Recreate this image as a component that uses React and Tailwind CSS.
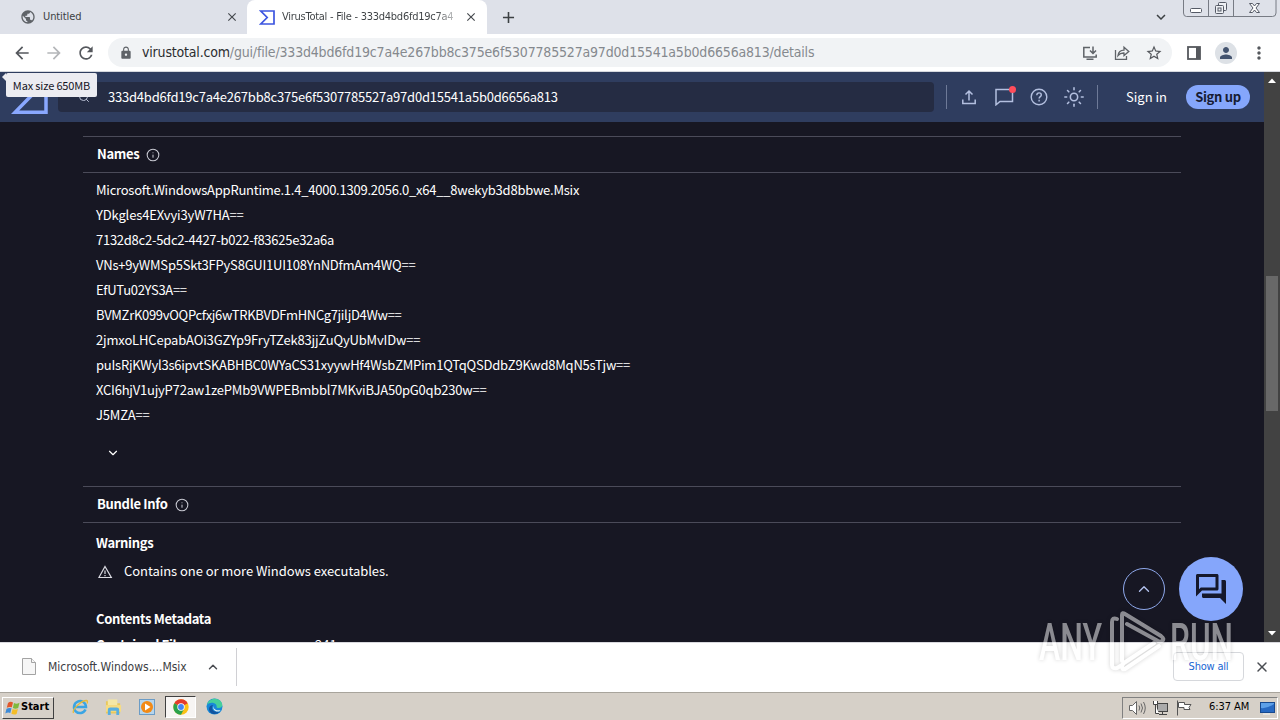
import { ChevronDown, ChevronUp, Info, Search, Sun, X } from 'lucide-react';
import {
  MdAdd, MdArrowBack, MdArrowForward, MdClose, MdExpandMore, MdLock, MdMoreVert, MdOutlineForum,
  MdPerson, MdPublic, MdRefresh, MdStarBorder,
} from 'react-icons/md';

const HASH = '333d4bd6fd19c7a4e267bb8c375e6f5307785527a97d0d15541a5b0d6656a813';

const names = [
  { text: 'Microsoft.WindowsAppRuntime.1.4_4000.1309.2056.0_x64__8wekyb3d8bbwe.Msix', cls: 'tracking-[-0.24px]' },
  { text: 'YDkgles4EXvyi3yW7HA==', cls: 'tracking-[-0.15px]' },
  { text: '7132d8c2-5dc2-4427-b022-f83625e32a6a', cls: 'tracking-[-0.26px]' },
  { text: 'VNs+9yWMSp5Skt3FPyS8GUI1UI108YnNDfmAm4WQ==', cls: 'tracking-[-0.22px]' },
  { text: 'EfUTu02YS3A==', cls: 'tracking-[-0.3px]' },
  { text: 'BVMZrK099vOQPcfxj6wTRKBVDFmHNCg7jiljD4Ww==', cls: 'tracking-[-0.3px]' },
  { text: '2jmxoLHCepabAOi3GZYp9FryTZek83jjZuQyUbMvIDw==', cls: 'tracking-[-0.17px]' },
  { text: 'puIsRjKWyl3s6ipvtSKABHBC0WYaCS31xyywHf4WsbZMPim1QTqQSDdbZ9Kwd8MqN5sTjw==', cls: 'tracking-[-0.24px]' },
  { text: 'XCI6hjV1ujyP72aw1zePMb9VWPEBmbbl7MKviBJA50pG0qb230w==', cls: 'tracking-[-0.21px]' },
  { text: 'J5MZA==', cls: 'tracking-[-0.2px]' },
];

function WindowButtons() {
  return (
    <svg className="absolute right-[3px] top-0" width="94" height="17" fill="none" stroke="#777b84">
      <path d="M.5 0v13q0 3.500 3 3.500h86q3.500 0 3.500-3.500V0M25.500 0v16M50.500 0v16" />
      <rect x="7.500" y="8.500" width="11" height="4" rx="1" fill="#fff" stroke="#555a66" />
      <g fill="#eef0f4" stroke="#555a66">
        <rect x="35.500" y="2.500" width="8" height="8" rx="1" />
        <rect x="32.500" y="5.500" width="8" height="8" rx="1" />
        <rect x="35" y="8" width="3" height="3" />
      </g>
      <path d="M66.500 3.500h3l2 2.500 2-2.500h3L73 8l3.500 4.500h-3l-2-2.500-2 2.500h-3L70 8z" fill="#fff" stroke="#555a66" />
    </svg>
  );
}

function TabStrip() {
  return (
    <div className="relative flex h-[34px] shrink-0 bg-[#dee1e9]">
      <div className="flex w-[247px] items-center pl-5 pr-2">
        <MdPublic className="size-4 text-[#5f6368]" />
        <span className="ml-[7px] flex-1 text-[11px] tracking-[-0.1px] text-[#3c4043]">Untitled</span>
        <MdClose className="size-3.5 text-[#45494e]" />
      </div>
      <div className="relative flex w-[240px] items-center rounded-t-lg bg-white pl-3 pr-[9px]">
        <svg width="16" height="15" viewBox="0 0 16 15" fill="none" stroke="#3d55e0" strokeWidth="1.700">
          <path d="M1.800 1h13.200v13H1.800L8.200 7.500z" />
        </svg>
        <span className="ml-[7px] w-[175px] overflow-hidden whitespace-nowrap bg-linear-to-r from-[#3c4043] from-88% to-[#3c4043]/20 bg-clip-text text-[11px] tracking-[-0.26px] text-transparent">
          VirusTotal - File - 333d4bd6fd19c7a4
        </span>
        <MdClose className="ml-auto size-3.5 text-[#45494e]" />
      </div>
      <MdAdd className="ml-3 mt-2 size-[19px] text-[#3c4043]" />
      <MdExpandMore className="ml-auto mr-[110px] mt-2 size-[18px] text-[#3c4043]" />
      <WindowButtons />
    </div>
  );
}

function Toolbar() {
  return (
    <div className="flex h-[38px] shrink-0 items-center border-b border-[#d5d8de] bg-white pl-3">
      <MdArrowBack className="size-5 text-[#55585d]" />
      <MdArrowForward className="ml-3 size-5 text-[#b4b6b9]" />
      <MdRefresh className="ml-3 size-5 text-[#55585d]" />
      <div className="ml-3 flex h-[29px] w-[1064px] items-center rounded-full bg-[#f1f3f5] pl-[11px] pr-[9px]">
        <MdLock className="size-3.5 text-[#5f6368]" />
        <span className="ml-[9px] flex-1 whitespace-nowrap text-[14px] tracking-[-0.18px] text-[#85898e]">
          <span className="text-[#2b2d30]">virustotal.com</span>/gui/file/{HASH}/details
        </span>
        <svg width="16" height="16" fill="none" stroke="#5f6368" strokeWidth="1.500">
          <path d="M8 2.500H1.800v9.500h12.400V9.500M4.500 14.200h7M11 1.500v6.500M8 5.500l3 3 3-3" />
        </svg>
        <svg className="ml-4" width="16" height="16" fill="none" stroke="#5f6368" strokeWidth="1.300">
          <path d="M1.500 5v9.300h11V11M4 10.500C4.500 7 7 5.300 10 5.200V2.300l4.800 4.200L10 10.500V8C7.500 7.900 5.500 8.700 4 10.500z" />
        </svg>
        <MdStarBorder className="ml-[15px] size-[18px] text-[#55585d]" />
      </div>
      <svg className="ml-[15px]" width="14" height="14" fill="none" stroke="#55585d">
        <rect x="1" y="1" width="12" height="12" strokeWidth="1.800" />
        <rect x="9" y="1" width="4" height="12" fill="#55585d" stroke="none" />
      </svg>
      <div className="ml-[14px] flex size-[22px] items-center justify-center rounded-full bg-[#dde1e6]">
        <MdPerson className="size-[18px] text-[#44546f]" />
      </div>
      <MdMoreVert className="ml-3 size-5 text-[#55585d]" />
    </div>
  );
}

function SiteHeader() {
  return (
    <header className="flex h-[50px] shrink-0 items-center bg-[#2f3d5f] text-[13px] text-white">
      <svg className="ml-[11px]" width="37" height="34" fill="none" stroke="#8aa8ff" strokeWidth="3.500">
        <path d="M3 1.800h32v30.500H4L19 17z" />
      </svg>
      <div className="ml-[10px] flex h-[30px] w-[876px] items-center rounded bg-[#252c43] pl-5">
        <Search className="size-3 text-[#b8bfd3]" />
        <span className="ml-[18px] tracking-[-0.21px]">{HASH}</span>
      </div>
      <div className="ml-3 flex h-6 items-center border-x border-[#6e7a98] pl-[14px] pr-3 text-[#b4c0e0]">
        <svg width="16" height="16" fill="none" stroke="currentColor" strokeWidth="1.500">
          <path d="M1.800 10.500v4h12.400v-4M8 11.500V2.500M4.500 5.500 8 2l3.500 3.500" />
        </svg>
        <div className="relative ml-[18px]">
          <svg width="19" height="18" fill="none" stroke="currentColor" strokeWidth="1.500">
            <path d="M1 1.500h16.500v12H5L1 16.800z" />
          </svg>
          <span className="absolute -right-0.5 -top-0.5 size-[7px] rounded-full bg-[#ff4d5b]" />
        </div>
        <svg className="ml-4" width="18" height="18" fill="none" stroke="currentColor" strokeWidth="1.400">
          <circle cx="9" cy="9" r="7.800" />
          <path d="M6.800 7.200c0-1.500 1-2.300 2.300-2.300s2.200.8 2.200 2c0 1.700-2.200 1.700-2.200 3.600M9.100 11.800v1.600" />
        </svg>
        <Sun className="ml-[15px] size-[22px]" strokeWidth={1.7} />
      </div>
      <span className="ml-[28px] w-[60px]">Sign in</span>
      <span className="flex h-6 w-16 items-center justify-center rounded-full bg-[#85a6fb] font-bold tracking-[-0.3px] text-[#161b33]">
        Sign up
      </span>
    </header>
  );
}

function SectionTitle({ children }) {
  return (
    <div className="flex h-[37px] items-center border-y border-[#4b4b59] pb-px pl-[14px] font-bold tracking-[-0.3px]">
      {children}
      <Info className="ml-[7px] mt-px size-[14px] text-[#c9cad3]" strokeWidth={1.8} />
    </div>
  );
}

function Details() {
  return (
    <main className="min-h-0 flex-1 overflow-hidden px-[83px] pt-[14px] text-[13px] text-white">
      <SectionTitle>Names</SectionTitle>
      <ul className="pl-[13px] pt-1">
        {names.map(n => (
          <li key={n.text} className={`h-[25px] whitespace-nowrap leading-[25px] ${n.cls}`}>{n.text}</li>
        ))}
      </ul>
      <ChevronDown className="ml-[23px] mt-[19px] size-[14px]" />
      <div className="mt-[26px]">
        <SectionTitle>Bundle Info</SectionTitle>
      </div>
      <div className="pl-[13px]">
        <h3 className="mt-[10px] font-bold leading-5 tracking-[-0.32px]">Warnings</h3>
        <div className="mt-2 flex h-5 items-center">
          <svg className="ml-0.5 mt-0.5" width="15" height="14" fill="none" stroke="#dcdce3" strokeWidth="1.200">
            <path d="M7 1.500 13.300 12.500H.9zM7 5.500v3.500M7 10v1.300" />
          </svg>
          <span className="ml-[11px] tracking-[-0.06px]">Contains one or more Windows executables.</span>
        </div>
        <h3 className="mt-7 font-bold leading-5 tracking-[-0.34px]">Contents Metadata</h3>
        <div className="mt-[6px] flex leading-5">
          <span className="w-[219px] font-bold tracking-[-0.34px]">Contained Files</span>
          <span>241</span>
        </div>
      </div>
    </main>
  );
}

function Scrollbar() {
  return (
    <div className="flex w-4 flex-col items-center bg-[#424242]">
      <svg width="16" height="16"><path d="M4 11l4-4.500 4 4.500z" fill="#fff" /></svg>
      <div className="mt-[188px] h-[135px] w-3 bg-[#686868]" />
      <svg className="mt-auto" width="16" height="16"><path d="M4 5l4 4.500L12 5z" fill="#fff" /></svg>
    </div>
  );
}

function DownloadBar() {
  return (
    <div className="flex h-[50px] shrink-0 items-center border-t border-[#d9d9de] bg-white pb-0.5 text-[12px]">
      <svg className="ml-[22px]" width="14" height="17" fill="#f6f6f6" stroke="#a3a3a3">
        <path d="M.5.500h9l4 4v12H.5z" />
        <path d="M9.500.500v4h4" />
      </svg>
      <span className="ml-3 w-[158px] text-[#3c4043]">Microsoft.Windows....Msix</span>
      <ChevronUp className="size-[14px] text-[#4a4d52]" strokeWidth={2.5} />
      <div className="ml-4 h-[38px] w-px bg-[#d0d0d4]" />
      <div className="ml-auto mr-[10px] flex h-[29px] w-[71px] items-center justify-center rounded border border-[#d6d8dc] pt-px text-[11px] tracking-[-0.2px] text-[#1a66d2]">
        Show all
      </div>
      <X className="mr-[10px] size-4 text-[#4a4d52]" strokeWidth={2.2} />
    </div>
  );
}

function WindowsFlag() {
  return (
    <svg width="16" height="16" viewBox="0 0 16 16">
      <path d="M3 3q2.500-2 5-.5L6.800 7.300q-2.500-1-5 .5z" fill="#e2572b" />
      <path d="M9 3q2.500 1.500 5.500-.3L13.200 8q-2.800 1.300-5.300 0z" fill="#7fb93c" />
      <path d="M1.500 8.800q2.500-1.500 5-.5L5.300 13q-2.400-1-5 .5z" fill="#3d8bd8" />
      <path d="M7.600 8.900q2.500 1.300 5.300.1L11.600 14q-2.800 1.200-5.200-.3z" fill="#f4bd27" />
    </svg>
  );
}

function Taskbar() {
  return (
    <div className="flex h-7 shrink-0 items-center border-t border-[#a8a49c] bg-[#d6d0c8] text-[11px] text-black">
      <div className="ml-0.5 mt-0.5 flex h-[22px] w-[52px] items-center border border-b-[#404040] border-l-white border-r-[#404040] border-t-white pl-0.5 font-bold">
        <WindowsFlag />
        <span>Start</span>
      </div>
      <svg className="ml-[17px]" width="18" height="18" viewBox="0 0 18 18" fill="none">
        <path d="M14.500 11.500A6 6 0 1 1 15 9H4" stroke="#3aa5e4" strokeWidth="2.500" />
        <path d="M2.500 15C.5 12 10 2.500 15.500 2.500c1.500.3 1 2 .5 3" stroke="#e6ba3a" strokeWidth="1.300" />
      </svg>
      <svg className="ml-4" width="17" height="18" viewBox="0 0 18 18">
        <path d="M1 3h6l1.500 2H16v11H1z" fill="#e9c85c" />
        <path d="M3 1h10v6H3z" fill="#f5e7a5" />
        <path d="M1 7h16v7H1z" fill="#f6dc83" />
        <path d="M3 17.500V12q0-2.500 2.500-2.500h7Q15 9.500 15 12v5.500h-3V13H6v4.500z" fill="#58aee0" />
      </svg>
      <svg className="ml-[17px]" width="16" height="16" viewBox="0 0 16 16">
        <rect x=".5" y=".5" width="15" height="15" fill="#b6d5ec" stroke="#6b9cc6" />
        <circle cx="8" cy="8" r="6" fill="#f28a16" />
        <path d="M6 4.500v7L11.500 8z" fill="#fff" />
      </svg>
      <div className="ml-[10px] flex h-[22px] w-[31px] items-center justify-center border border-b-white border-l-[#404040] border-r-white border-t-[#404040] bg-[#f7f5f3]">
        <svg width="16" height="16" viewBox="0 0 16 16">
          <circle cx="8" cy="8" r="7.700" fill="#fbc116" />
          <path d="M8 8 1.300 4.200A7.700 7.700 0 0 1 14.700 4.200z" fill="#e33b2e" />
          <path d="M8 8 1.300 4.200A7.700 7.700 0 0 0 8 15.700L11 10z" fill="#2ba24c" />
          <circle cx="8" cy="8" r="3.700" fill="#fff" />
          <circle cx="8" cy="8" r="2.900" fill="#4285f4" />
        </svg>
      </div>
      <svg className="ml-[10px]" width="17" height="17" viewBox="0 0 17 17">
        <circle cx="8.500" cy="8.500" r="8" fill="#1788d8" />
        <path d="M1 7C2 1 10-1.500 14.500 3c3 3.500 2 7-2 7-3 0-1-1.500-2.500-3.500C8 4 3 4 1 7z" fill="#45cf9b" />
        <path d="M7 7c-3 4 1 8 7 6.500C10 18 3 16 3 11c0-2.500 2-4 4-4z" fill="#1254a0" />
        <path d="M8 8c-1 3 2 5 6.500 4l-1 1.300C9 14.500 6 11 8 8z" fill="#e5eef2" />
      </svg>
      <div className="ml-auto mr-0.5 mt-0.5 flex h-[22px] w-[156px] items-center border border-b-white border-l-[#808080] border-r-white border-t-[#808080] pl-1.5">
        <svg width="17" height="16" fill="#fff" stroke="#666">
          <path d="M.5 5.500h3l4-4v13l-4-4h-3z" />
          <path d="M10 5.500q1.500 2.500 0 5M12 3.500q3 4.500 0 9M14.500 2q3.500 6 0 12" fill="none" />
        </svg>
        <svg className="ml-[6px]" width="16" height="16" fill="#fff" stroke="#444">
          <rect x="5.500" y="3.500" width="10" height="8" fill="#aaa" />
          <path d="M7 14.500h8M10.500 12v2M1.500 1v3.500h4V1M3.500 5v8.500H7" />
        </svg>
        <svg className="ml-[8px]" width="17" height="16" fill="#fff" stroke="#555">
          <path d="M1.500.5v15M2.500 2.500h6v2h6.500l-2 3 1 2H8v-2H2.500z" />
        </svg>
        <span className="ml-4 w-[51px] whitespace-nowrap tracking-[-0.05px]">6:37 AM</span>
        <svg width="15" height="14">
          <rect x=".5" y="1.500" width="14" height="10" fill="#2769c2" stroke="#17498f" />
          <path d="M1 7q5 1 13-4V2H1z" fill="#5da0e8" />
          <path d="M3 13h7" stroke="#f5f5f5" />
        </svg>
      </div>
    </div>
  );
}

function Watermark() {
  return (
    <svg className="absolute left-[1030px] top-[604px] opacity-50 drop-shadow-[0_0_2px_rgba(0,0,0,0.35)]" width="210" height="76" fill="#fff">
      <text x="9" y="56" textLength="63" lengthAdjust="spacingAndGlyphs" className="font-[Roboto] text-[52px] font-medium">ANY</text>
      <text x="140" y="56" textLength="63" lengthAdjust="spacingAndGlyphs" className="font-[Roboto] text-[52px] font-medium">RUN</text>
      <g fill="none" stroke="#fff" strokeWidth="4" strokeLinecap="round" strokeLinejoin="round">
        <path d="M87 15q-5-2-5 3v43q0 4 5 3l5-3" />
        <path d="M92 57V11q0-3 3-1l36 22q4 3 1 5-2 1-4 0L97 20" />
        <path d="M129 42 95 65q-3 1-3-2 0-2 2-4l30-20" />
      </g>
    </svg>
  );
}

export default function App() {
  return (
    <div className="relative flex h-[720px] w-[1280px] flex-col overflow-hidden font-['DejaVu_Sans_Condensed','DejaVu_Sans',sans-serif]">
      <TabStrip />
      <Toolbar />
      <div className="flex min-h-0 flex-1">
        <div className="flex w-[1264px] flex-col bg-[#171723] font-['Noto_Sans_CJK_SC',sans-serif]">
          <SiteHeader />
          <Details />
        </div>
        <Scrollbar />
      </div>
      <DownloadBar />
      <Taskbar />

      <div className="absolute left-[6px] top-[73px] flex h-6 w-[91px] items-center justify-center rounded-xs bg-[#ececf1] font-['Noto_Sans_CJK_SC',sans-serif] text-[11px] tracking-[-0.15px] text-[#15151f]">
        Max size 650MB
      </div>
      <div className="absolute left-[2px] top-[73px] border-4 border-l-0 border-transparent border-r-[#ececf1]" />
      <div className="absolute left-[1123px] top-[568px] flex size-[42px] items-center justify-center rounded-full border border-[#8fa9ec] text-[#b3c2ee]">
        <ChevronUp className="size-[18px]" strokeWidth={1.8} />
      </div>
      <div className="absolute left-[1179px] top-[557px] flex size-16 items-center justify-center rounded-full bg-[#85a6fb]">
        <MdOutlineForum className="size-9 text-[#15182b]" />
      </div>
      <Watermark />
    </div>
  );
}
